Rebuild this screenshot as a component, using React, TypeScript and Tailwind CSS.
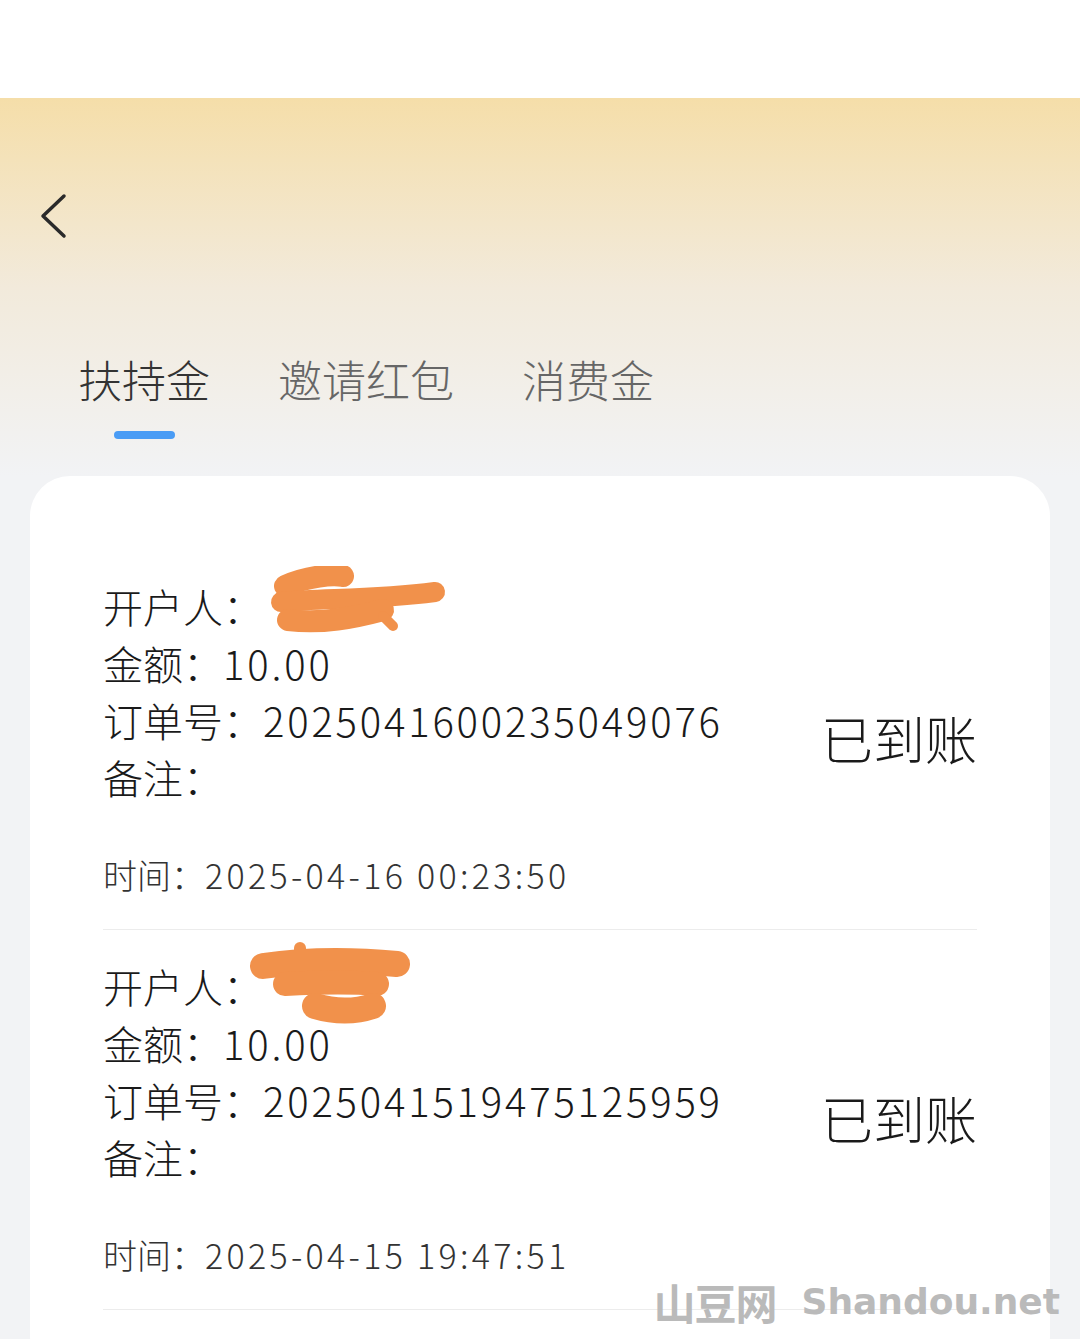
import React from "react";

const records = [
  { no: "2025041600235049076", time: "2025-04-16 00:23:50", blob: 1 },
  { no: "2025041519475125959", time: "2025-04-15 19:47:51", blob: 2 },
];

const Blob = ({ kind }: { kind: number }) =>
  kind === 1 ? (
    <svg className="absolute left-[160px] top-[-12px]" width="190" height="76" viewBox="0 0 190 76">
      <g stroke="#f1914b" strokeLinecap="round" strokeLinejoin="round" fill="none">
        <path d="M22 20 C45 10 70 8 80 10" strokeWidth="22" />
        <path d="M18 36 C60 32 110 34 172 26" strokeWidth="20" />
        <path d="M25 54 C60 58 90 52 120 44" strokeWidth="22" />
        <path d="M120 50 L130 60" strokeWidth="10" />
      </g>
    </svg>
  ) : (
    <svg className="absolute left-[142px] top-[-22px]" width="170" height="96" viewBox="0 0 170 96">
      <g stroke="#f1914b" strokeLinecap="round" strokeLinejoin="round" fill="none">
        <path d="M55 12 L55 20" strokeWidth="12" />
        <path d="M18 30 C60 24 110 24 152 28" strokeWidth="26" />
        <path d="M40 48 C80 46 110 46 132 48" strokeWidth="24" />
        <path d="M70 70 C90 76 110 76 128 70" strokeWidth="26" />
      </g>
    </svg>
  );

export default function App() {
  return (
    <div
      className="relative w-[1080px] h-[1339px] overflow-hidden bg-[#f2f3f5] text-[#1a1a1a] font-light"
      style={{ fontFamily: '"Noto Sans CJK SC", "Noto Sans", sans-serif' }}
    >
      <div className="h-[98px] bg-white" />
      <div className="h-[378px] bg-gradient-to-b from-[#f5dea9] via-[#f2eadb] to-[#f2f3f5]">
        <div className="pt-[95px] pl-[38px]">
          <svg width="32" height="46" viewBox="0 0 32 46">
            <path d="M26 3 L5 23 L26 43" stroke="#2a2a2a" strokeWidth="3.5" fill="none" strokeLinecap="round" strokeLinejoin="round" />
          </svg>
        </div>
        <div className="flex gap-[68px] pl-[78px] mt-[112px] text-[44px] leading-[56px] text-[#666]">
          <div className="flex flex-col items-center">
            <span className="text-[#333]">扶持金</span>
            <span className="mt-[24px] h-[8px] w-[61px] rounded-full bg-[#4a9cf5]" />
          </div>
          <span>邀请红包</span>
          <span>消费金</span>
        </div>
      </div>

      <div className="mx-[30px] rounded-[40px] bg-white px-[73px] pt-[74px] h-[900px]">
        {records.map((r, i) => (
          <div key={i} className="flex items-center justify-between border-b border-[#ececec] pt-[28px] pb-[26px]">
            <div className="text-[40px] leading-[57px]">
              <div className="relative">
                开户人：
                <Blob kind={r.blob} />
              </div>
              <div>
                金额：<span className="tracking-[2.8px]">10.00</span>
              </div>
              <div>
                订单号：<span className="tracking-[2.8px]">{r.no}</span>
              </div>
              <div>备注：</div>
              <div className="mt-[41px] text-[34px] leading-[56px] text-[#333]">
                时间：<span className="tracking-[3.3px]">{r.time}</span>
              </div>
            </div>
            <div className="text-[52px] leading-[60px] mb-[6px]">已到账</div>
          </div>
        ))}
      </div>

      <div className="absolute right-[20px] bottom-[6px] flex items-center gap-[25px] font-bold text-[#bababa]">
        <span className="text-[42px] tracking-[-1px]">山豆网</span>
        <span className="text-[36px]" style={{ fontFamily: '"DejaVu Sans", sans-serif' }}>
          Shandou.net
        </span>
      </div>
    </div>
  );
}
